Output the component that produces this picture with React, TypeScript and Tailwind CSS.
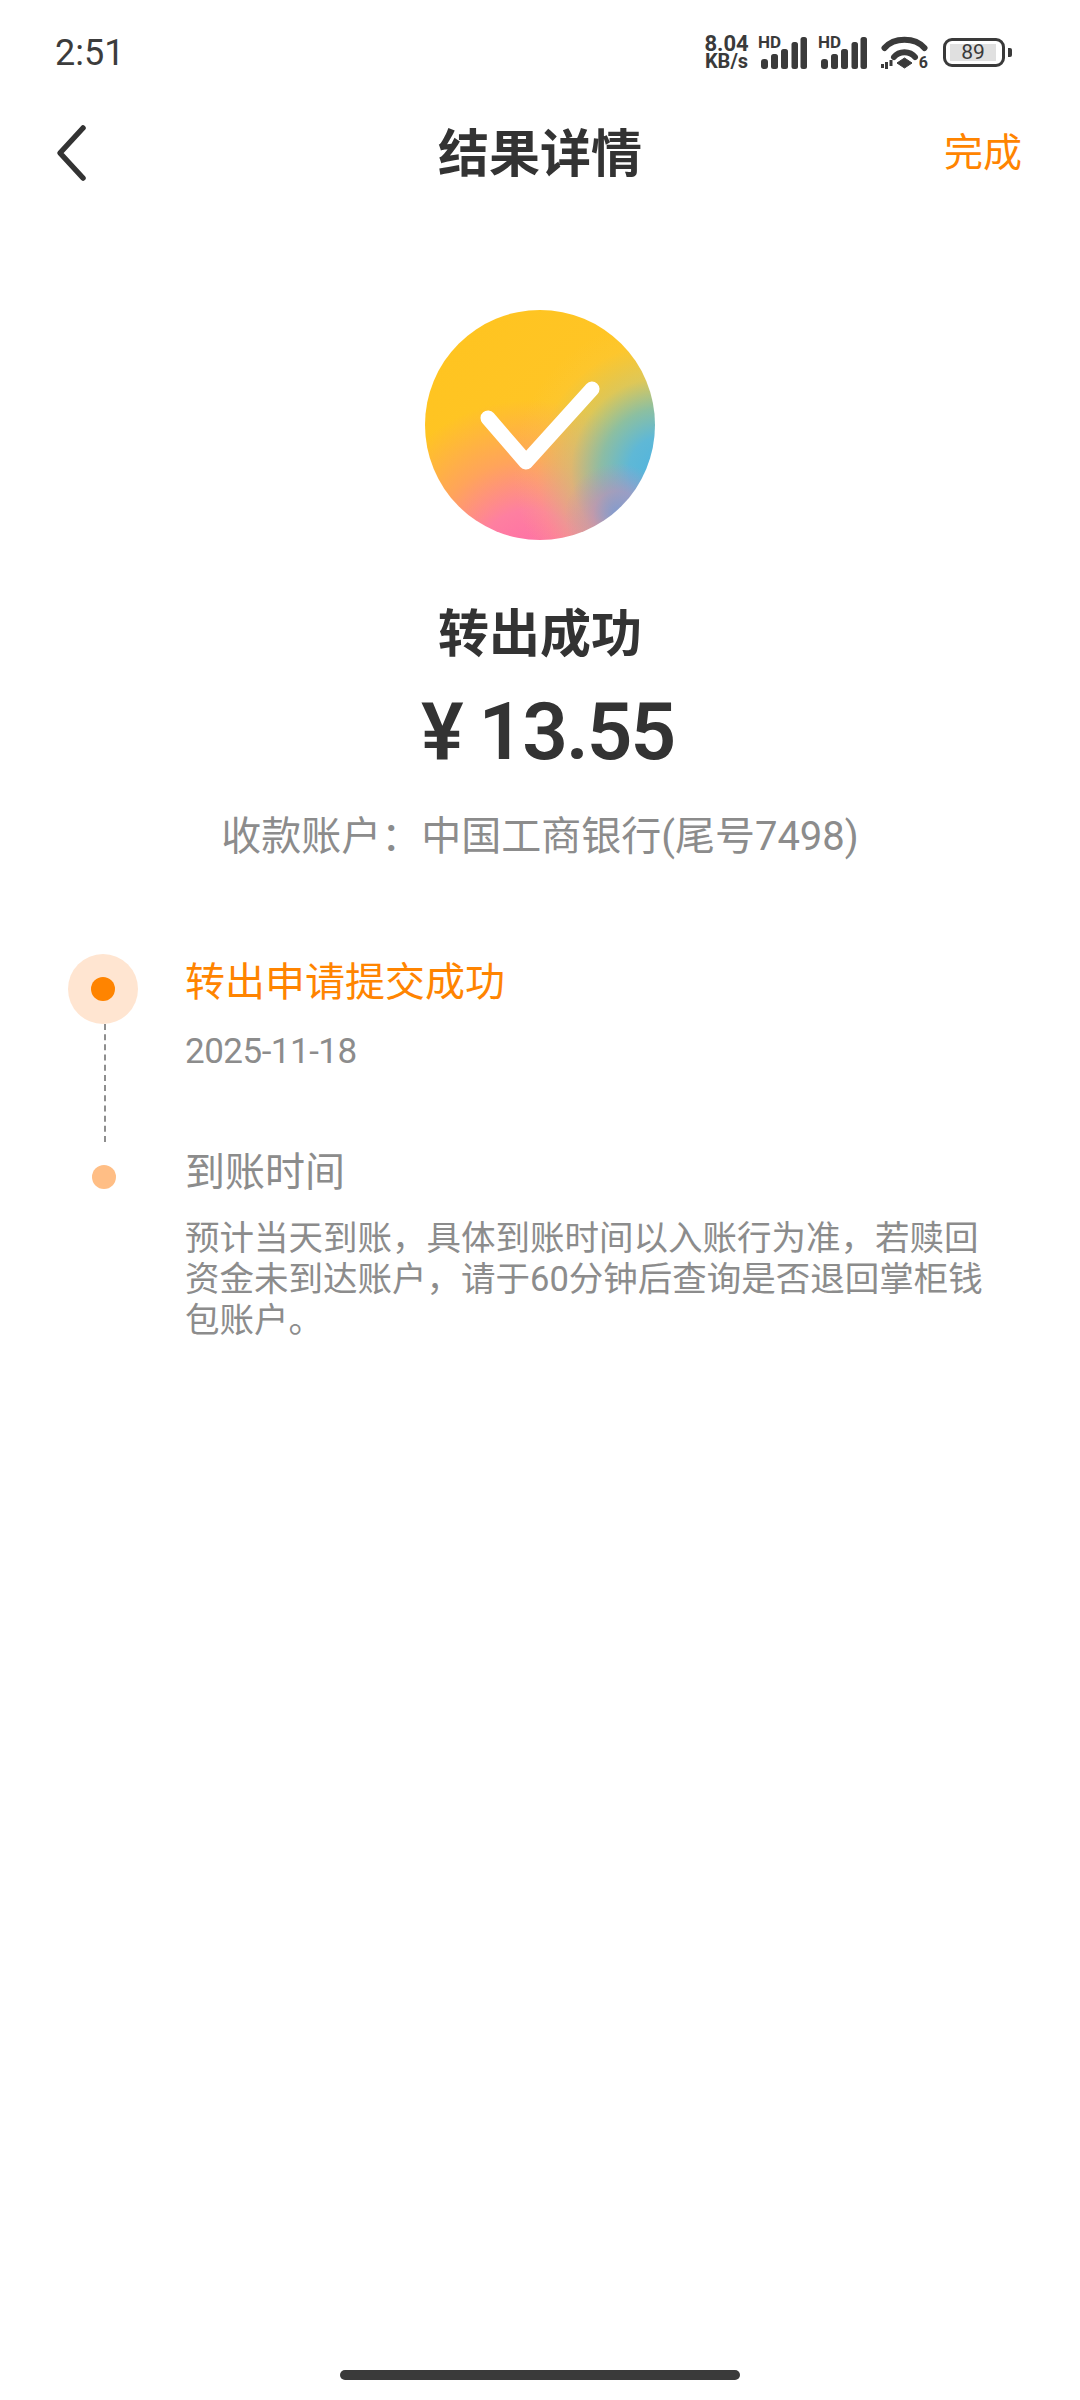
import React from "react";

function Signal() {
  return (
    <div className="relative h-[33px] w-[49px]">
      <span className="absolute left-0 top-0 text-[17px] leading-[13px] font-bold text-[#3a3a3a] font-['Roboto',sans-serif]">HD</span>
      <svg width="49" height="33" viewBox="0 0 49 33" className="absolute left-0 top-0">
        <g fill="#3a3a3a">
          <rect x="3" y="23" width="7" height="10" rx="3" />
          <rect x="13" y="18" width="7" height="15" rx="2.5" />
          <rect x="23" y="13" width="7" height="20" rx="2.5" />
          <rect x="33.5" y="6" width="6.5" height="27" rx="2.5" />
          <rect x="42.5" y="1" width="6.5" height="32" rx="2.5" />
        </g>
      </svg>
    </div>
  );
}

function Wifi() {
  return (
    <div className="relative h-[33px] w-[47px]">
      <svg width="47" height="33" viewBox="0 0 47 33" className="absolute left-0 top-0">
        <g fill="none" stroke="#3a3a3a" strokeWidth="6" strokeLinecap="round">
          <path d="M3.5 12 C13 1 34 1 43.5 12" />
          <path d="M13 21 C18 14.5 29 14.5 34 21" />
        </g>
        <path d="M23.5 22 L31 27 L23.5 32 L16 27 Z" fill="#3a3a3a" strokeLinejoin="round" stroke="#3a3a3a" strokeWidth="1" />
        <g fill="#3a3a3a">
          <rect x="0" y="28" width="3" height="4" />
          <rect x="4" y="26" width="3" height="7" />
          <rect x="8.5" y="24" width="3" height="6" />
        </g>
      </svg>
      <span className="absolute right-0 bottom-[-2px] text-[16px] leading-[16px] font-bold text-[#3a3a3a] font-['Roboto',sans-serif]">6</span>
    </div>
  );
}

function Battery() {
  return (
    <div className="flex items-center gap-[3px]">
      <div className="flex h-[29px] w-[62px] items-center rounded-[9px] border-[3px] border-[#3a3a3a] py-[3px] pl-[4px]">
        <div className="flex h-full w-[46px] items-center justify-center bg-[#e0e0e0] text-[21px] leading-none text-[#3a3a3a] font-['Roboto',sans-serif]">89</div>
      </div>
      <div className="h-[9px] w-[4px] rounded-r-[2px] bg-[#3a3a3a]" />
    </div>
  );
}

export default function App() {
  return (
    <div className="flex h-[2400px] w-[1080px] flex-col bg-white font-['Roboto','Noto_Sans_CJK_SC',sans-serif]">
      <div className="flex h-[104px] shrink-0 items-center justify-between pl-[55px] pr-[68px]">
        <span className="pt-[2px] text-[36px] leading-none text-[#3c3c3c]">2:51</span>
        <div className="flex items-center">
          <div className="mr-[8px] flex w-[47px] flex-col items-center text-[#3a3a3a] font-bold font-['Roboto',sans-serif]">
            <span className="text-[22px] leading-[18px]">8.04</span>
            <span className="text-[20px] leading-[17px]">KB/s</span>
          </div>
          <Signal />
          <div className="ml-[11px]"><Signal /></div>
          <div className="ml-[14px]"><Wifi /></div>
          <div className="ml-[15px]"><Battery /></div>
        </div>
      </div>

      <div className="grid h-[98px] shrink-0 grid-cols-[1fr_auto_1fr] items-center pl-[50px] pr-[58px]">
        <svg width="40" height="60" viewBox="0 0 40 60" className="shrink-0">
          <path d="M33 5 L10 30 L33 55" fill="none" stroke="#333333" strokeWidth="5.5" strokeLinecap="round" strokeLinejoin="round" />
        </svg>
        <span className="pl-[8px] pt-[3px] text-[51px] leading-none font-bold text-[#333333]">结果详情</span>
        <span className="justify-self-end text-[39px] leading-none text-[#ff8400]">完成</span>
      </div>

      <div className="mt-[108px] flex flex-col items-center">
        <div className="relative h-[230px] w-[230px] overflow-hidden rounded-full bg-[radial-gradient(circle_at_192px_205px,rgba(125,150,215,0.85)_0px,rgba(190,135,195,0.55)_24px,rgba(230,140,160,0)_52px),radial-gradient(circle_at_238px_160px,#4fb4e0_0px,#5fb8d6_34px,rgba(120,190,180,0.85)_62px,rgba(190,200,130,0.5)_92px,rgba(240,205,90,0.14)_126px,rgba(255,200,60,0)_150px),radial-gradient(circle_at_105px_255px,#ff6aa8_0px,#fe7fa0_55px,rgba(255,155,105,0.78)_105px,rgba(255,190,60,0)_165px),linear-gradient(135deg,#ffc41f_0%,#ffc526_55%,#fdcf50_100%)]">
          <svg width="230" height="230" viewBox="0 0 230 230" className="absolute left-0 top-0">
            <path d="M63 108 L101 152 L167 79" fill="none" stroke="#ffffff" strokeWidth="15" strokeLinecap="round" strokeLinejoin="round" />
          </svg>
        </div>
        <div className="mt-[65px] text-[51px] leading-[60px] font-bold text-[#333333]">转出成功</div>
        <div className="mt-[17px] flex h-[100px] items-center pl-[15px] font-semibold text-[#333333]">
          <span className="mr-[15px] text-[80px] leading-none">¥</span>
          <span className="text-[80px] leading-none tracking-[-2px]">13.55</span>
        </div>
        <div className="mt-[27px] text-[40px] leading-[56px] text-[#8c8c8c]">收款账户：中国工商银行(尾号7498)</div>
      </div>

      <div className="mt-[89px] pl-[68px] pr-[60px]">
        <div className="flex">
          <div className="flex w-[70px] shrink-0 flex-col items-center">
            <div className="flex h-[70px] w-[70px] shrink-0 items-center justify-center rounded-full bg-[#ffe5d1]">
              <div className="h-[24px] w-[24px] rounded-full bg-[#ff8400]" />
            </div>
            <div className="ml-[3px] h-[118px] border-l-2 border-dashed border-[#8e8e8e]" />
          </div>
          <div className="ml-[47px] flex flex-col">
            <div className="pt-[1px] text-[40px] leading-[56px] text-[#ff8400]">转出申请提交成功</div>
            <div className="mt-[19px] text-[35px] leading-[44px] tracking-[-0.5px] text-[#8c8c8c]">2025-11-18</div>
          </div>
        </div>
        <div className="mt-[3px] flex">
          <div className="flex w-[70px] shrink-0 justify-center pt-[20px]">
            <div className="ml-[1px] h-[24px] w-[24px] rounded-full bg-[#ffbe85]" />
          </div>
          <div className="ml-[47px] flex flex-col">
            <div className="text-[40px] leading-[56px] text-[#8c8c8c]">到账时间</div>
            <div className="mt-[17px] w-[815px] text-[34.5px] leading-[41px] text-[#8c8c8c]">预计当天到账，具体到账时间以入账行为准，若赎回资金未到达账户，请于60分钟后查询是否退回掌柜钱包账户。</div>
          </div>
        </div>
      </div>

      <div className="mt-auto mb-[20px] flex justify-center">
        <div className="h-[10px] w-[400px] rounded-full bg-[#3a3a3a]" />
      </div>
    </div>
  );
}
